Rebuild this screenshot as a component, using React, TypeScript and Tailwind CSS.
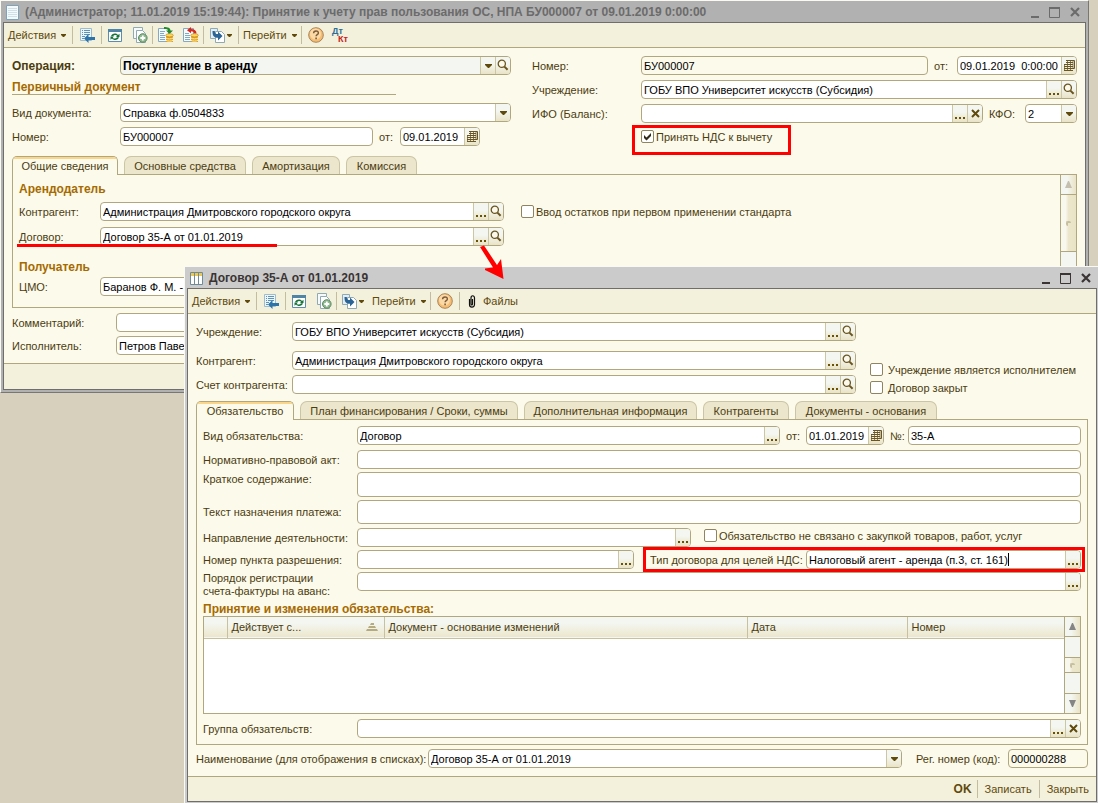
import { useId, type ReactNode } from "react";

type FieldButton = "dots" | "search" | "clear" | "calendar";

const DotsIcon = () => (
  <svg width="10" height="15" viewBox="0 0 10 15" fill="#6b5200">
    <path d="M0 11h2v2H0zM4 11h2v2H4zM8 11h2v2H8z" />
  </svg>
);

const SearchIcon = () => (
  <svg width="12" height="13" viewBox="0 0 12 13" fill="none" stroke="#6b5620">
    <circle cx="4.8" cy="4.8" r="3.6" strokeWidth="1.3" fill="#fbf9ec" />
    <path d="M7.4 7.6L10.6 10.8" strokeWidth="2" />
  </svg>
);

const ClearIcon = () => (
  <svg width="9" height="9" viewBox="0 0 9 9" fill="none" stroke="#5f4a0c">
    <path d="M1 1l7 7M8 1L1 8" strokeWidth="2" />
  </svg>
);

const CalendarIcon = () => (
  <svg width="11" height="11" viewBox="0 0 11 11" fill="none" stroke="#6b5620">
    <path d="M2 .5h8.500v8H9" />
    <path d="M2 2.500h7M0 4.500h9M0 6.500h9M0 8.500h9M0 10.500h9" />
    <path d="M.5 4v7M3.500 1v10M6.500 1v10M9 1v8" strokeOpacity=".75" />
  </svg>
);

const Caret = ({ className = "" }: { className?: string }) => (
  <svg
    width="7"
    height="4"
    viewBox="0 0 7 4"
    fill="#5f4a0c"
    className={className}
  >
    <path d="M0 0h7v1L4 4H3L0 1z" />
  </svg>
);

const SmallCaret = () => (
  <svg width="5" height="3" viewBox="0 0 5 3" fill="#5f4a0c">
    <path d="M0 0h5v1L3 3H2L0 1z" />
  </svg>
);

const icons: Record<FieldButton, { label: string; icon: ReactNode }> = {
  dots: { label: "Выбрать", icon: <DotsIcon /> },
  search: { label: "Открыть", icon: <SearchIcon /> },
  clear: { label: "Очистить", icon: <ClearIcon /> },
  calendar: { label: "Календарь", icon: <CalendarIcon /> }
};

const frame =
  "flex h-[19px] overflow-hidden rounded-[4px] border border-[#b0a77f]";

const FieldButtons = ({ buttons }: { buttons: FieldButton[] }) => (
  <>
    {buttons.map((name) => (
      <button
        key={name}
        type="button"
        aria-label={icons[name].label}
        className="flex w-[15px] shrink-0 items-center justify-center border-l border-[#cdc6a3] bg-linear-to-b from-[#f4f7f1] from-40% to-[#e9e3c6]"
      >
        {icons[name].icon}
      </button>
    ))}
  </>
);

interface FieldProps {
  id?: string;
  label?: string;
  value?: string;
  buttons?: FieldButton[];
  locked?: boolean;
  className?: string;
}

const Field = ({
  id,
  label,
  value = "",
  buttons = [],
  locked = false,
  className = "flex-1"
}: FieldProps) => (
  <div
    className={`${frame} ${className} ${locked ? "bg-[#fcfaeb]" : "bg-white"}`}
  >
    <input
      id={id}
      aria-label={label}
      defaultValue={value}
      readOnly={locked}
      className="min-w-0 flex-1 px-[2px] text-black outline-none"
    />
    <FieldButtons buttons={buttons} />
  </div>
);

interface SelectFieldProps {
  id: string;
  value: string;
  bold?: boolean;
  buttons?: FieldButton[];
  className?: string;
}

const SelectField = ({
  id,
  value,
  bold = false,
  buttons = [],
  className = "flex-1"
}: SelectFieldProps) => (
  <div
    className={`${frame} ${className} ${bold ? "bg-[#f4f7f1]" : "bg-white"}`}
  >
    <div className="relative flex min-w-0 flex-1">
      <select
        id={id}
        defaultValue={value}
        className={`w-full appearance-none px-[2px] text-black outline-none ${bold ? "text-[12px] font-bold" : ""}`}
      >
        <option>{value}</option>
      </select>
      <span className="pointer-events-none absolute inset-y-0 right-0 flex w-[15px] items-center justify-center border-l border-[#cdc6a3] bg-linear-to-b from-[#f4f7f1] from-40% to-[#e9e3c6]">
        <Caret />
      </span>
    </div>
    <FieldButtons buttons={buttons} />
  </div>
);

interface RowProps {
  label: string;
  labelClass: string;
  className?: string;
  children: (id: string) => ReactNode;
}

const Row = ({ label, labelClass, className = "", children }: RowProps) => {
  const id = useId();
  return (
    <div className={`flex items-center ${className}`}>
      <label htmlFor={id} className={`shrink-0 ${labelClass}`}>
        {label}
      </label>
      {children(id)}
    </div>
  );
};

interface CheckProps {
  label: string;
  checked?: boolean;
  className?: string;
}

const Check = ({ label, checked = false, className = "gap-[2px]" }: CheckProps) => (
  <label className={`flex h-[13px] items-center ${className}`}>
    <span className="relative size-[13px] shrink-0">
      <input
        type="checkbox"
        defaultChecked={checked}
        className="peer block size-[13px] appearance-none rounded-[2px] border border-[#8f8460] bg-white"
      />
      <svg
        width="13"
        height="13"
        viewBox="0 0 13 13"
        className="pointer-events-none absolute inset-0 hidden peer-checked:block"
      >
        <path d="M3 5v3l2.500 2.500L10 6V3L5.500 7.500z" fill="#2f2a1c" />
      </svg>
    </span>
    {label}
  </label>
);

interface Tab {
  text: string;
  width: string;
}

const Tabs = ({ tabs }: { tabs: Tab[] }) => (
  <div role="tablist" className="relative z-10 -mb-px flex h-[19px] gap-[6px]">
    {tabs.map(({ text, width }, i) => (
      <button
        key={text}
        type="button"
        role="tab"
        aria-selected={i === 0}
        className={`${width} relative overflow-hidden whitespace-nowrap border border-b-0 ${
          i === 0
            ? "rounded-t-[5px] border-[#b0a77f] bg-[#fcfaeb]"
            : "mb-px rounded-t-[7px] border-[#cbc4a5] bg-[#ece6cc]"
        }`}
      >
        {i === 0 && (
          <span className="absolute inset-x-0 top-0 h-[2px] bg-[#fbd68a]" />
        )}
        {text}
      </button>
    ))}
  </div>
);

const Heading = ({
  children,
  className = ""
}: {
  children: ReactNode;
  className?: string;
}) => (
  <h2 className={`h-[14px] text-[12px] leading-[14px] font-bold text-[#a66a00] ${className}`}>
    {children}
  </h2>
);

/* Toolbar */

const Sep = () => (
  <span className="h-[18px] w-px shrink-0 self-center bg-[#c3bda0]" />
);

const MenuButton = ({ children }: { children: string }) => (
  <button type="button" className="flex items-center gap-[5px] px-1">
    {children}
    <SmallCaret />
  </button>
);

const IconButton = ({
  label,
  className = "w-[25px]",
  children
}: {
  label: string;
  className?: string;
  children: ReactNode;
}) => (
  <button
    type="button"
    aria-label={label}
    className={`flex shrink-0 items-center justify-center ${className}`}
  >
    {children}
  </button>
);

const SaveIcon = () => (
  <svg width="16" height="16" viewBox="0 0 16 16">
    <path d="M1.500 1.500h11v12h-11z" fill="#eef5fa" stroke="#9dbccc" />
    <path d="M3 3.500h1M5 3.500h6M3 5.500h1M5 5.500h6M3 7.500h1M5 7.500h6M3 9.500h3M3 11.500h2" stroke="#5d94b5" />
    <path d="M5 11.500L9.500 7v3H16v3H9.500v3z" fill="#2f74a8" />
  </svg>
);

const RefreshIcon = () => (
  <svg width="14" height="13" viewBox="0 0 14 13">
    <path d="M.5.5h13v12H.5z" fill="#fff" stroke="#5c8dab" />
    <path d="M0 0h14v3H0z" fill="#4f84a6" />
    <path d="M3 7.200c.8-3 5-3.600 7-1.200L11.500 4.800V8H8l1.200-1.200C7.800 5.500 6 5.800 5 7.200z" fill="#17733a" />
    <path d="M11 8.300c-.8 3-5 3.600-7 1.200L2.500 10.700V7.500H6L4.800 8.700C6.200 10 8 9.700 9 8.300z" fill="#17733a" />
  </svg>
);

const CopyIcon = () => (
  <svg width="16" height="16" viewBox="0 0 16 16">
    <path d="M1.500.5h9v11h-9z" fill="#f6fafb" stroke="#8fa9b5" />
    <path d="M4.500 3.500h6l3 3v9h-9z" fill="#fff" stroke="#8fa9b5" />
    <circle cx="10.800" cy="11" r="4.300" fill="#8fb98f" stroke="#5d8b62" />
    <path d="M10.800 8.500v5M8.300 11h5" stroke="#fff" strokeWidth="1.800" />
  </svg>
);

const Coins = () => (
  <>
    <path d="M8 8h7v7H8z" fill="#e0a020" />
    <ellipse cx="11.500" cy="8.300" rx="3.800" ry="1.600" fill="#ffd75e" stroke="#b98012" strokeWidth=".6" />
    <path d="M7.800 11c2 1.200 5.400 1.200 7.400 0M7.800 13.200c2 1.200 5.400 1.200 7.400 0" stroke="#fff0a8" fill="none" />
  </>
);

const PostIcon = () => (
  <svg width="16" height="16" viewBox="0 0 16 16">
    <path d="M.5 1.500h10v13H.5z" fill="#f7fafc" stroke="#86a9bd" />
    <path d="M2 4.500h5M2 6.500h4M2 8.500h5M2 10.500h5M2 12.500h5" stroke="#7fabc4" />
    <path d="M6 0c4 0 6.500 1 6.500 3.500H15L11.500 7 8 3.500h2C10 2.300 8.500 2 6 2z" fill="#238a2c" />
    <Coins />
  </svg>
);

const UnpostIcon = () => (
  <svg width="16" height="16" viewBox="0 0 16 16">
    <path d="M.5 1.500h10v13H.5z" fill="#f7fafc" stroke="#86a9bd" />
    <path d="M2 6.500h4M2 8.500h5M2 10.500h5M2 12.500h5" stroke="#7fabc4" />
    <path d="M4 3.200L8 0v2c3.500 0 5.500 1.500 5.500 4.500h-2.500C11 5 10 4.300 8 4.300v2z" fill="#d8261c" />
    <Coins />
  </svg>
);

const BasedOnIcon = () => (
  <svg width="15" height="15" viewBox="0 0 15 15">
    <path d="M.5.5h7v10h-7z" fill="#e3edf2" stroke="#8fa9b5" />
    <path d="M5.500 3.500h6l3 3v8h-9z" fill="#fff" stroke="#8fa9b5" />
    <path d="M2.500 3h2.300c0 2.500.8 3 3.200 3V3.500L12.500 8 8 12.500V9.800c-4.500 0-5.500-2.300-5.500-6.800z" fill="#2a6496" />
  </svg>
);

const HelpIcon = () => (
  <svg width="16" height="16" viewBox="0 0 16 16">
    <circle cx="8" cy="8" r="7.300" fill="#f6bd72" stroke="#a8845a" />
    <circle cx="7.500" cy="7" r="5.500" fill="#fbd9a6" />
    <path d="M5.600 6.300c0-3 4.800-3 4.800-.4 0 1.700-2.300 1.700-2.300 3.400" fill="none" stroke="#7d5a38" strokeWidth="1.400" />
    <path d="M7.300 10.600h1.600v1.600H7.300z" fill="#7d5a38" />
  </svg>
);

const ClipIcon = () => (
  <svg width="8" height="13" viewBox="0 0 8 13" fill="none" stroke="#111">
    <path d="M1.500 4v5.500c0 3.500 5 3.500 5 0V3c0-3-3.500-3-3.500 0v6c0 1.200 1.500 1.200 1.500 0V4" strokeWidth="1.200" />
  </svg>
);

const Toolbar = ({ full = false }: { full?: boolean }) => (
  <div className="flex h-[25px] items-stretch border-b border-[#b0a77f] bg-[#f3f0dc] text-[#5f4a0c]">
    <div className="flex w-[68px]">
      <MenuButton>Действия</MenuButton>
    </div>
    <Sep />
    <IconButton label="Записать и закрыть" className="w-[28px]">
      <SaveIcon />
    </IconButton>
    <Sep />
    <IconButton label="Обновить">
      <RefreshIcon />
    </IconButton>
    <IconButton label="Скопировать">
      <CopyIcon />
    </IconButton>
    <Sep />
    {full && (
      <>
        <IconButton label="Провести">
          <PostIcon />
        </IconButton>
        <IconButton label="Отмена проведения">
          <UnpostIcon />
        </IconButton>
        <Sep />
      </>
    )}
    <IconButton
      label="Ввести на основании"
      className={full ? "w-[34px] gap-[2px]" : "w-[31px] gap-[2px]"}
    >
      <BasedOnIcon />
      <SmallCaret />
    </IconButton>
    {full && <Sep />}
    <div className="flex w-[62px]">
      <MenuButton>Перейти</MenuButton>
    </div>
    <Sep />
    <IconButton label="Справка" className="w-[28px]">
      <HelpIcon />
    </IconButton>
    {full ? (
      <button
        type="button"
        className="flex w-[20px] flex-col justify-center pl-[2px] text-[9px] leading-[8px] font-bold"
      >
        <span className="text-left text-[#2f6d94]">Дт</span>
        <span className="pl-[6px] text-left text-[#c8201c]">Кт</span>
      </button>
    ) : (
      <>
        <Sep />
        <button type="button" className="flex items-center gap-[7px] pl-[8px]">
          <ClipIcon />
          Файлы
        </button>
      </>
    )}
  </div>
);

/* Window frame */

interface WindowProps {
  title: string;
  icon: ReactNode;
  active?: boolean;
  className: string;
  children: ReactNode;
}

const Window = ({
  title,
  icon,
  active = false,
  className,
  children
}: WindowProps) => (
  <section
    className={`border border-t-[#fbfaf2] border-r-[#777] border-b-[#777] border-l-[#fbfaf2] px-[2px] pb-[2px] ${
      active ? "bg-[#cbcbcb] text-[#3a3434]" : "bg-[#b1b1b1] text-[#6b6b6b]"
    } ${className}`}
  >
    <header className="flex h-[21px] items-center pt-px pl-[3px]">
      {icon}
      <h1 className="min-w-0 flex-1 truncate pl-[6px] text-[12px] font-bold">
        {title}
      </h1>
      <button type="button" aria-label="Свернуть" className="w-5 pl-[6px]">
        <svg width="8" height="12" viewBox="0 0 8 12">
          <path d="M0 10h8v2H0z" fill="currentColor" />
        </svg>
      </button>
      <button type="button" aria-label="Развернуть" className="w-5 pl-[4px]">
        <svg width="11" height="11" viewBox="0 0 11 11" fill="none">
          <path d="M.5 1v9.500h10V1" stroke="currentColor" />
          <path d="M0 0h11v2H0z" fill="currentColor" />
        </svg>
      </button>
      <button type="button" aria-label="Закрыть" className="w-[21px] pl-[5px]">
        <svg width="10" height="10" viewBox="0 0 10 10">
          <path d="M1 1l8 8M9 1L1 9" stroke="currentColor" strokeWidth="2.200" />
        </svg>
      </button>
    </header>
    <div className="border border-[#6e6e6e] bg-[#fcfaeb] text-[#4b3c10]">
      {children}
    </div>
  </section>
);

const DocumentIcon = () => (
  <svg width="13" height="15" viewBox="0 0 13 15">
    <path d="M.5.5h12v14H.5z" fill="#f4f9fc" stroke="#7fa3b8" />
    <path d="M2 3.500h9M2 5.500h9M2 7.500h9M2 9.500h9M2 11.500h9" stroke="#cfe0e9" />
  </svg>
);

const CatalogIcon = () => (
  <svg width="13" height="13" viewBox="0 0 13 13">
    <path d="M.5.5h12v12H.5z" fill="#fff" stroke="#6c8b9c" />
    <path d="M1 1h11v3H1z" fill="#f0c94c" />
    <path d="M4.500 0v13M8.500 0v13" stroke="#6c8b9c" />
  </svg>
);

const ScrollArrow = ({
  down = false,
  faint = false
}: {
  down?: boolean;
  faint?: boolean;
}) => (
  <span
    className={`flex h-[20px] items-center justify-center border-[#b0a77f] bg-linear-to-r from-[#f4f7f1] from-40% to-[#e9e3c6] ${
      down ? "border-t" : "border-b"
    }`}
  >
    <svg width="7" height="7" viewBox="0 0 7 7" fill={faint ? "#c4bfae" : "#858585"}>
      <path d={down ? "M0 0h7L4 7H3z" : "M3 0h1l3 7H0z"} />
    </svg>
  </span>
);

const Thumb = ({ className }: { className: string }) => (
  <span
    className={`flex items-center justify-center border-b border-[#b0a77f] bg-linear-to-r from-[#f9f8ee] from-30% via-[#ece6cc] via-50% to-[#e9e3c6] ${className}`}
  >
    <span className="size-[5px] rounded-[2px] border-t-2 border-l-2 border-[#c6bfa0]" />
  </span>
);

const rightsTabs: Tab[] = [
  { text: "Общие сведения", width: "w-[106px]" },
  { text: "Основные средства", width: "w-[122px]" },
  { text: "Амортизация", width: "w-[88px]" },
  { text: "Комиссия", width: "w-[71px]" }
];

const contractTabs: Tab[] = [
  { text: "Обязательство", width: "w-[98px]" },
  { text: "План финансирования / Сроки, суммы", width: "w-[218px]" },
  { text: "Дополнительная информация", width: "w-[173px]" },
  { text: "Контрагенты", width: "w-[86px]" },
  { text: "Документы - основания", width: "w-[142px]" }
];

const RightsWindow = () => (
  <Window
    title="(Администратор; 11.01.2019 15:19:44): Принятие к учету прав пользования ОС, НПА БУ000007 от 09.01.2019 0:00:00"
    icon={<DocumentIcon />}
    className="mr-[9px]"
  >
    <Toolbar full />
    <div className="px-2 pt-2 pb-2">
      <div className="flex gap-[21px]">
        <div className="w-[499px] shrink-0">
          <Row label="Операция:" labelClass="w-[108px] text-[12px] font-bold">
            {(id) => (
              <SelectField
                id={id}
                value="Поступление в аренду"
                bold
                buttons={["search"]}
              />
            )}
          </Row>
          <Heading className="mt-[5px]">Первичный документ</Heading>
          <div className="mb-2 w-[384px] border-t border-[#b0a77f]" />
          <Row label="Вид документа:" labelClass="w-[108px]">
            {(id) => <SelectField id={id} value="Справка ф.0504833" />}
          </Row>
          <div className="mt-[5px] flex">
            <Row label="Номер:" labelClass="w-[108px]">
              {(id) => <Field id={id} value="БУ000007" className="w-[253px]" />}
            </Row>
            <Row label="от:" labelClass="w-[21px]" className="ml-[6px]">
              {(id) => (
                <Field
                  id={id}
                  value="09.01.2019"
                  buttons={["calendar"]}
                  className="w-[80px]"
                />
              )}
            </Row>
          </div>
        </div>

        <div className="min-w-0 flex-1">
          <div className="flex">
            <Row label="Номер:" labelClass="w-[109px]" className="flex-1">
              {(id) => <Field id={id} value="БУ000007" locked />}
            </Row>
            <Row label="от:" labelClass="w-[23px]" className="ml-[6px]">
              {(id) => (
                <Field
                  id={id}
                  value="09.01.2019  0:00:00"
                  buttons={["calendar"]}
                  className="w-[120px]"
                />
              )}
            </Row>
          </div>
          <Row label="Учреждение:" labelClass="w-[109px]" className="mt-[5px]">
            {(id) => (
              <Field
                id={id}
                value="ГОБУ ВПО Университет искусств (Субсидия)"
                buttons={["dots", "search"]}
              />
            )}
          </Row>
          <div className="mt-[5px] flex">
            <Row label="ИФО (Баланс):" labelClass="w-[109px]" className="flex-1">
              {(id) => <Field id={id} buttons={["dots", "clear"]} />}
            </Row>
            <Row label="КФО:" labelClass="w-[36px]" className="ml-[6px]">
              {(id) => <SelectField id={id} value="2" className="w-[52px]" />}
            </Row>
          </div>
          <div className="relative mt-[7px] ml-[109px] w-[141px]">
            <Check label="Принять НДС к вычету" checked />
            <span className="pointer-events-none absolute -inset-x-[9px] -top-[5px] -bottom-3 border-3 border-[#fe0000]" />
          </div>
        </div>
      </div>

      <div className="mt-[10px]">
        <Tabs tabs={rightsTabs} />
        <div className="flex border border-[#b0a77f]">
          <div className="flex-1 pt-[7px] pb-[11px] pl-[6px]">
            <Heading>Арендодатель</Heading>
            <div className="mt-[6px] flex items-center">
              <Row label="Контрагент:" labelClass="w-[81px]">
                {(id) => (
                  <Field
                    id={id}
                    value="Администрация Дмитровского городского округа"
                    buttons={["dots", "search"]}
                    className="w-[404px]"
                  />
                )}
              </Row>
              <Check
                label="Ввод остатков при первом применении стандарта"
                className="ml-[17px] gap-[2px]"
              />
            </div>
            <div className="relative mt-[6px]">
              <Row label="Договор:" labelClass="w-[81px]">
                {(id) => (
                  <Field
                    id={id}
                    value="Договор 35-А от 01.01.2019"
                    buttons={["dots", "search"]}
                    className="w-[404px]"
                  />
                )}
              </Row>
              <span className="pointer-events-none absolute -bottom-px -left-[2px] h-[3px] w-[260px] bg-[#fe0000]" />
            </div>
            <Heading className="mt-[14px]">Получатель</Heading>
            <Row label="ЦМО:" labelClass="w-[81px]" className="mt-[3px]">
              {(id) => (
                <Field
                  id={id}
                  value="Баранов Ф. М. - "
                  buttons={["dots", "search"]}
                  className="w-[404px]"
                />
              )}
            </Row>
          </div>
          <div
            aria-hidden="true"
            className="w-[16px] border-l border-[#b0a77f] bg-[#f4f7f1]"
          >
            <ScrollArrow faint />
            <Thumb className="h-[57px]" />
          </div>
        </div>
      </div>

      <Row label="Комментарий:" labelClass="w-[104px]" className="mt-[5px]">
        {(id) => <Field id={id} />}
      </Row>
      <Row label="Исполнитель:" labelClass="w-[104px]" className="mt-[4px]">
        {(id) => <Field id={id} value="Петров Павел" />}
      </Row>
    </div>
    <footer className="h-[26px] border-t border-[#b0a77f] bg-[#f3f0dc]" />
  </Window>
);

const ChangesTable = () => (
  <div className="flex h-[98px] border border-[#b0a77f] bg-white">
    <div className="min-w-0 flex-1">
      <table className="w-full table-fixed border-collapse">
        <colgroup>
          <col className="w-[23px]" />
          <col className="w-[157px]" />
          <col className="w-[363px]" />
          <col className="w-[160px]" />
          <col />
        </colgroup>
        <thead>
          <tr className="h-[21px] border-b border-[#c8c1a0] bg-linear-to-b from-[#f4f7f1] from-30% to-[#ece6cc] text-left">
            <td className="border-r border-[#c8c1a0]" />
            <th className="border-r border-[#c8c1a0] px-1 font-normal">
              <span className="flex items-center justify-between pr-[2px]">
                Действует с...
                <svg width="12" height="8" viewBox="0 0 12 8" fill="#b5aa80">
                  <path d="M5 0h3v2H4zM3 3h6l1 2H2zM1 6h10l1 2H0z" />
                </svg>
              </span>
            </th>
            <th className="border-r border-[#c8c1a0] px-1 font-normal">
              Документ - основание изменений
            </th>
            <th className="border-r border-[#c8c1a0] px-1 font-normal">Дата</th>
            <th className="px-1 font-normal">Номер</th>
          </tr>
        </thead>
        <tbody />
      </table>
    </div>
    <div
      aria-hidden="true"
      className="flex w-[16px] flex-col border-l border-[#b0a77f] bg-[#f4f7f1]"
    >
      <ScrollArrow />
      <Thumb className="mt-5 h-[16px] border-t" />
      <span className="flex-1" />
      <ScrollArrow down />
    </div>
  </div>
);

const ContractWindow = () => (
  <Window
    title="Договор 35-А от 01.01.2019"
    icon={<CatalogIcon />}
    active
    className="absolute top-[266px] -right-[2px] left-[184px]"
  >
    <Toolbar />
    <div className="px-2 pt-2 pb-2">
      <div className="flex gap-[14px]">
        <div className="w-[660px] shrink-0">
          <Row label="Учреждение:" labelClass="w-[96px]">
            {(id) => (
              <Field
                id={id}
                value="ГОБУ ВПО Университет искусств (Субсидия)"
                buttons={["dots", "search"]}
              />
            )}
          </Row>
          <Row label="Контрагент:" labelClass="w-[96px]" className="mt-[10px]">
            {(id) => (
              <Field
                id={id}
                value="Администрация Дмитровского городского округа"
                buttons={["dots", "search"]}
              />
            )}
          </Row>
          <Row
            label="Счет контрагента:"
            labelClass="w-[96px]"
            className="mt-[5px]"
          >
            {(id) => <Field id={id} buttons={["dots", "search"]} />}
          </Row>
        </div>
        <div className="flex flex-col justify-end gap-[5px] whitespace-nowrap">
          <Check label="Учреждение является исполнителем" className="gap-[5px]" />
          <Check label="Договор закрыт" className="gap-[5px]" />
        </div>
      </div>

      <div className="mt-[7px]">
        <Tabs tabs={contractTabs} />
        <div className="border border-[#b0a77f] p-[6px]">
          <div className="flex">
            <Row
              label="Вид обязательства:"
              labelClass="w-[154px]"
              className="flex-1"
            >
              {(id) => <Field id={id} value="Договор" buttons={["dots"]} />}
            </Row>
            <Row label="от:" labelClass="w-[20px]" className="ml-[6px]">
              {(id) => (
                <Field
                  id={id}
                  value="01.01.2019"
                  buttons={["calendar"]}
                  className="w-[78px]"
                />
              )}
            </Row>
            <Row label="№:" labelClass="w-[18px]" className="ml-[6px]">
              {(id) => <Field id={id} value="35-А" className="w-[173px]" />}
            </Row>
          </div>
          <Row
            label="Нормативно-правовой акт:"
            labelClass="w-[154px]"
            className="mt-[5px]"
          >
            {(id) => <Field id={id} />}
          </Row>
          <div className="mt-[3px] flex items-start">
            <label htmlFor="summary" className="w-[154px] shrink-0">
              Краткое содержание:
            </label>
            <textarea
              id="summary"
              className="block h-[25px] min-w-0 flex-1 resize-none rounded-[4px] border border-[#b0a77f] bg-white px-[2px]"
            />
          </div>
          <div className="mt-[3px] flex items-center">
            <label htmlFor="purpose" className="w-[154px] shrink-0">
              Текст назначения платежа:
            </label>
            <textarea
              id="purpose"
              className="block h-[24px] min-w-0 flex-1 resize-none rounded-[4px] border border-[#b0a77f] bg-white px-[2px]"
            />
          </div>
          <div className="mt-[4px] flex items-start">
            <Row label="Направление деятельности:" labelClass="w-[154px]">
              {(id) => (
                <Field id={id} buttons={["dots"]} className="w-[334px]" />
              )}
            </Row>
            <Check
              label="Обязательство не связано с закупкой товаров, работ, услуг"
              className="mt-px ml-[13px] gap-[2px] whitespace-nowrap"
            />
          </div>
          <div className="mt-[3px] flex gap-[16px]">
            <Row label="Номер пункта разрешения:" labelClass="w-[154px]">
              {(id) => (
                <Field id={id} buttons={["dots"]} className="w-[277px]" />
              )}
            </Row>
            <div className="relative flex flex-1 items-center">
              <label htmlFor="vat-type" className="w-[156px] shrink-0">
                Тип договора для целей НДС:
              </label>
              <div className={`${frame} flex-1 bg-white`}>
                <div className="flex min-w-0 flex-1 items-center">
                  <input
                    id="vat-type"
                    defaultValue="Налоговый агент - аренда (п.3, ст. 161)"
                    className="field-sizing-content pl-[2px] text-black outline-none"
                  />
                  <span className="h-[13px] w-px bg-black" />
                </div>
                <FieldButtons buttons={["dots"]} />
              </div>
              <span className="pointer-events-none absolute -inset-y-[3px] -right-1 -left-[7px] border-3 border-[#fe0000]" />
            </div>
          </div>
          <div className="mt-[3px] flex h-[27px] items-start">
            <label
              htmlFor="invoice-order"
              className="w-[154px] shrink-0 leading-[13px]"
            >
              Порядок регистрации
              <br />
              счета-фактуры на аванс:
            </label>
            <Field id="invoice-order" buttons={["dots"]} />
          </div>
          <Heading className="mt-[3px]">
            Принятие и изменения обязательства:
          </Heading>
          <ChangesTable />
          <Row
            label="Группа обязательств:"
            labelClass="w-[154px]"
            className="mt-[5px]"
          >
            {(id) => <Field id={id} buttons={["dots", "clear"]} />}
          </Row>
        </div>
      </div>

      <div className="mt-[4px] flex gap-[14px]">
        <Row
          label="Наименование (для отображения в списках):"
          labelClass="w-[232px]"
          className="flex-1"
        >
          {(id) => <SelectField id={id} value="Договор 35-А от 01.01.2019" />}
        </Row>
        <Row label="Рег. номер (код):" labelClass="w-[92px]">
          {(id) => (
            <Field id={id} value="000000288" locked className="w-[80px]" />
          )}
        </Row>
      </div>
    </div>
    <footer className="flex h-[25px] items-stretch justify-end border-t border-[#b0a77f] bg-[#f3f0dc] text-[#5f4a0c]">
      <button type="button" className="px-[5px] text-[12px] font-bold">
        OK
      </button>
      <Sep />
      <button type="button" className="px-[7px]">
        Записать
      </button>
      <Sep />
      <button type="button" className="px-[7px]">
        Закрыть
      </button>
    </footer>
  </Window>
);

const App = () => {
  return (
    <main className="relative min-h-screen overflow-hidden bg-[#d7d0bd] font-['Liberation_Sans',Arial,sans-serif] text-[11px] leading-[14px]">
      <RightsWindow />
      <ContractWindow />
      <svg
        width="26"
        height="36"
        viewBox="0 0 26 36"
        className="pointer-events-none absolute top-[245px] left-[479px]"
        fill="#fe0000"
      >
        <path d="M1 2l4-1.500L18 20l4-6 2.500 20L6 25v-1.500l8-1z" />
      </svg>
    </main>
  );
};

export default App;
